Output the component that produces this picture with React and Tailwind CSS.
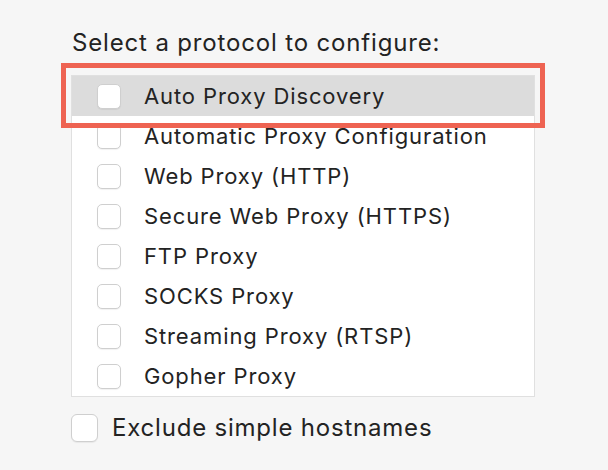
const protocols = [
  "Auto Proxy Discovery",
  "Automatic Proxy Configuration",
  "Web Proxy (HTTP)",
  "Secure Web Proxy (HTTPS)",
  "FTP Proxy",
  "SOCKS Proxy",
  "Streaming Proxy (RTSP)",
  "Gopher Proxy",
];

function Checkbox({ big }) {
  return (
    <div
      className={`${
        big ? "w-[27px] h-[28px] rounded-[6px]" : "w-[24px] h-[25px] rounded-[5px]"
      } shrink-0 bg-white border border-[#cfcfcf] shadow-[0_1px_1px_rgba(0,0,0,0.06)]`}
    />
  );
}

export default function App() {
  return (
    <div
      className="relative w-[608px] h-[470px] bg-[#f6f6f6] pl-[71px] pt-[29px] text-[#232323]"
      style={{ fontFamily: "Inter, 'Noto Sans', sans-serif" }}
    >
      <div className="text-[24px] leading-[28px] pl-[1px] tracking-[0.035em]">
        Select a protocol to configure:
      </div>

      <div className="mt-[18px] w-[464px] border border-[#e0e0e0] bg-white">
        {protocols.map((name, i) => (
          <div
            key={name}
            className={`h-[40px] flex items-center pl-[25px] ${
              i === 0 ? "bg-[#dcdcdc]" : ""
            }`}
          >
            <Checkbox />
            <span className="ml-[23px] text-[22px] leading-none tracking-[0.04em]">
              {name}
            </span>
          </div>
        ))}
      </div>

      <div className="mt-[17px] flex items-center">
        <Checkbox big />
        <span className="ml-[14px] text-[24px] leading-none tracking-[0.033em]">
          Exclude simple hostnames
        </span>
      </div>

      {/* highlight annotation */}
      <div className="absolute left-[61px] top-[63px] w-[484px] h-[65px] border-[5px] border-[#ee6352]" />
    </div>
  );
}
